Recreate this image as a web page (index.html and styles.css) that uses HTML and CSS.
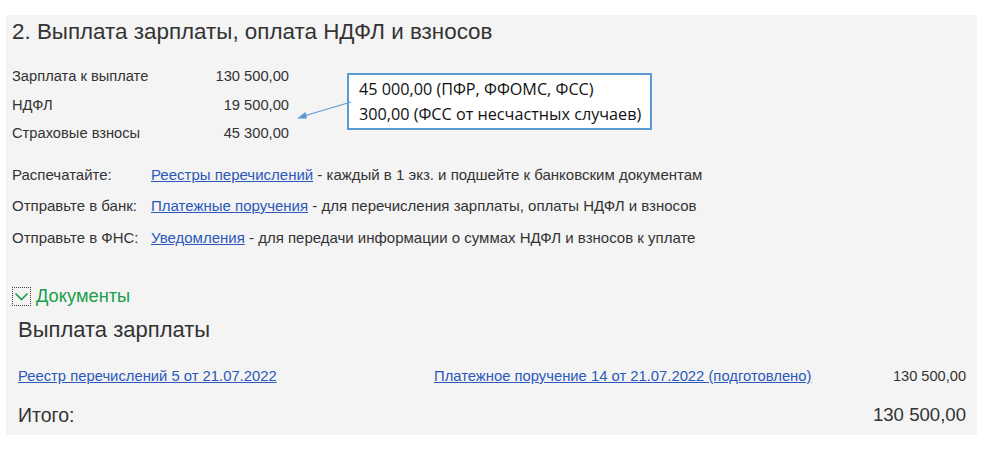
FILE: index.html
```html
<!DOCTYPE html>
<html lang="ru">
<head>
<meta charset="utf-8">
<link rel="stylesheet" href="styles.css">
</head>
<body>
<div class="panel">
  <h1 class="title">2. Выплата зарплаты, оплата НДФЛ и взносов</h1>
  <div class="summary">
    <div class="srow"><span>Зарплата к выплате</span><span>130 500,00</span></div>
    <div class="srow"><span>НДФЛ</span><span>19 500,00</span></div>
    <div class="srow"><span>Страховые взносы</span><span>45 300,00</span></div>
  </div>
  <div class="actions">
    <div class="arow"><span class="alabel">Распечатайте:</span><span><a href="#" class="link">Реестры перечислений</a> - каждый в 1 экз. и подшейте к банковским документам</span></div>
    <div class="arow"><span class="alabel">Отправьте в банк:</span><span><a href="#" class="link">Платежные поручения</a> - для перечисления зарплаты, оплаты НДФЛ и взносов</span></div>
    <div class="arow"><span class="alabel">Отправьте в ФНС:</span><span><a href="#" class="link">Уведомления</a> - для передачи информации о суммах НДФЛ и взносов к уплате</span></div>
  </div>
  <div class="docs-head">
    <span class="toggle"><svg width="15" height="10" viewBox="0 0 15 10"><path d="M1.5 1.5 L7.5 7.5 L13.5 1.5" fill="none" stroke="#1a9e4b" stroke-width="1.6"/></svg></span>
    <span class="docs-title">Документы</span>
  </div>
  <div class="docs">
    <h2 class="docs-sub">Выплата зарплаты</h2>
    <div class="drow">
      <a href="#" class="link">Реестр перечислений 5 от 21.07.2022</a>
      <a href="#" class="link">Платежное поручение 14 от 21.07.2022 (подготовлено)</a>
      <span class="amount">130 500,00</span>
    </div>
    <div class="total"><span>Итого:</span><span class="total-sum">130 500,00</span></div>
  </div>

  <div class="callout">
    <div>45 000,00 (ПФР, ФФОМС, ФСС)</div>
    <div>300,00 (ФСС от несчастных случаев)</div>
  </div>
  <svg class="arrow" width="56" height="22" viewBox="0 0 56 22">
    <line x1="55" y1="2" x2="8" y2="16" stroke="#5b9bd5" stroke-width="1.3"/>
    <path d="M1 18.5 L9.5 12 L11 18.5 Z" fill="#5b9bd5"/>
  </svg>
</div>
</body>
</html>
```
FILE: styles.css
```css
* { box-sizing: border-box; }
body {
  margin: 0;
  background: #ffffff;
  font-family: "Liberation Sans", Arial, sans-serif;
  color: #333333;
}
.panel {
  position: relative;
  margin: 15px 0 0 6px;
  width: 971px;
  height: 420px;
  background: #f4f4f4;
  padding: 4px 11px 0 6px;
}
.title {
  margin: 0;
  font-size: 22.4px;
  font-weight: normal;
  line-height: 26px;
  color: #333333;
}
.summary {
  margin-top: 17px;
  width: 277px;
  font-size: 14.7px;
}
.srow {
  display: flex;
  justify-content: space-between;
  height: 28.5px;
  line-height: 28.5px;
}
.actions {
  margin-top: 11px;
  font-size: 15px;
}
.arow {
  display: flex;
  height: 31.5px;
  line-height: 31.5px;
  white-space: nowrap;
}
.alabel {
  width: 139px;
  flex: none;
}
.link {
  color: #2b58b9;
  text-decoration: underline;
}
.docs-head {
  margin-top: 33px;
  display: flex;
  align-items: center;
  height: 20px;
}
.toggle {
  width: 19px;
  height: 19px;
  border: 1px dotted #444;
  display: flex;
  align-items: center;
  justify-content: center;
  padding-top: 1px;
}
.docs-title {
  margin-left: 5px;
  font-size: 18.3px;
  color: #1a9e4b;
}
.docs {
  padding-left: 6px;
}
.docs-sub {
  margin: 12px 0 0;
  font-size: 22px;
  font-weight: normal;
  line-height: 24px;
  color: #333333;
}
.drow {
  margin-top: 24px;
  display: grid;
  grid-template-columns: 416px 1fr auto;
  font-size: 14.8px;
  line-height: 20px;
  white-space: nowrap;
}
.drow .link { justify-self: start; }
.amount { font-size: 14.6px; }
.total {
  margin-top: 17px;
  display: flex;
  justify-content: space-between;
  font-size: 19.5px;
  line-height: 24px;
}
.total-sum {
  font-size: 18.6px;
}
.callout {
  position: absolute;
  left: 341px;
  top: 58px;
  width: 305px;
  height: 57px;
  background: #ffffff;
  border: 2px solid #5b9bd5;
  padding: 2px 0 0 10px;
  font-family: "Open Sans", "Liberation Sans", sans-serif;
  font-size: 16.2px;
  line-height: 25px;
  color: #111111;
  white-space: nowrap;
}
.arrow {
  position: absolute;
  left: 290px;
  top: 85px;
}
```
